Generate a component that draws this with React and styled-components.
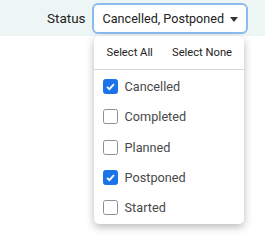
import styled, { createGlobalStyle } from "styled-components";
import { useState } from "react";

const Global = createGlobalStyle`
body{margin:0;background:#fff;font-family:Roboto,"Noto Sans",sans-serif;color:#2b2b2b;}
`;

const Page = styled.div`
position:relative;
min-height:237px;
`;

const Bar = styled.div`
display:flex;
justify-content:flex-end;
align-items:center;
gap:6px;
height:36px;
padding-right:17px;
background:#eef5f5;
`;

const Label = styled.span`
font-size:13.5px;
color:#222;
`;

const Wrap = styled.div`
position:relative;
`;

const Select = styled.div`
display:flex;
align-items:center;
gap:6px;
height:27px;
padding:0 8px 0 9px;
background:#fff;
border:2px solid #8cbcef;
border-radius:6px;
font-size:12.6px;
color:#222;
`;

const Caret = styled.span`
width:0;height:0;
border-left:4px solid transparent;
border-right:4px solid transparent;
border-top:5px solid #333;
margin-top:2px;
`;

const Menu = styled.div`
position:absolute;
z-index:5;
top:33px;
left:2px;
right:4px;
background:#fff;
border-radius:5px;
box-shadow:0 3px 8px rgba(0,0,0,0.28);
padding-bottom:1px;
`;

const Actions = styled.div`
display:flex;
justify-content:space-between;
padding:0 12px 0 13px;
height:33px;
align-items:center;
border-bottom:1px solid #d6d6d6;
`;

const Action = styled.button`
border:0;background:none;padding:0;
font-family:inherit;
font-size:11.2px;
color:#222;
cursor:pointer;
`;

const Item = styled.div`
display:flex;
align-items:center;
gap:7px;
height:30.3px;
padding-left:9px;
font-size:12.7px;
color:#484848;
cursor:pointer;
&:nth-child(2){margin-top:2px;}
`;

const Box = styled.span`
box-sizing:border-box;
width:15px;height:15px;
border-radius:2.5px;
display:flex;align-items:center;justify-content:center;
background:${p=>p.$on?"#1a73e8":"#fff"};
border:1px solid ${p=>p.$on?"#1a73e8":"#8f8f8f"};
`;

const opts=["Cancelled","Completed","Planned","Postponed","Started"];

export default function App(){
	const [sel,setSel]=useState(["Cancelled","Postponed"]);
	const toggle=o=>setSel(s=>s.includes(o)?s.filter(x=>x!==o):[...s,o]);
	return(
		<Page>
			<Global/>
			<Bar>
				<Label>Status</Label>
				<Wrap>
					<Select>{opts.filter(o=>sel.includes(o)).join(", ")}<Caret/></Select>
					<Menu>
						<Actions>
							<Action onClick={()=>setSel(opts)}>Select All</Action>
							<Action onClick={()=>setSel([])}>Select None</Action>
						</Actions>
						{opts.map(o=>(
							<Item key={o} onClick={()=>toggle(o)}>
								<Box $on={sel.includes(o)}>
									{sel.includes(o)?<svg width="11" height="11" viewBox="0 0 12 12"><path d="M2.2 6.3l2.6 2.6 5-5.6" fill="none" stroke="#fff" strokeWidth="2"/></svg>:null}
								</Box>
								{o}
							</Item>
						))}
					</Menu>
				</Wrap>
			</Bar>
		</Page>
	)
}
